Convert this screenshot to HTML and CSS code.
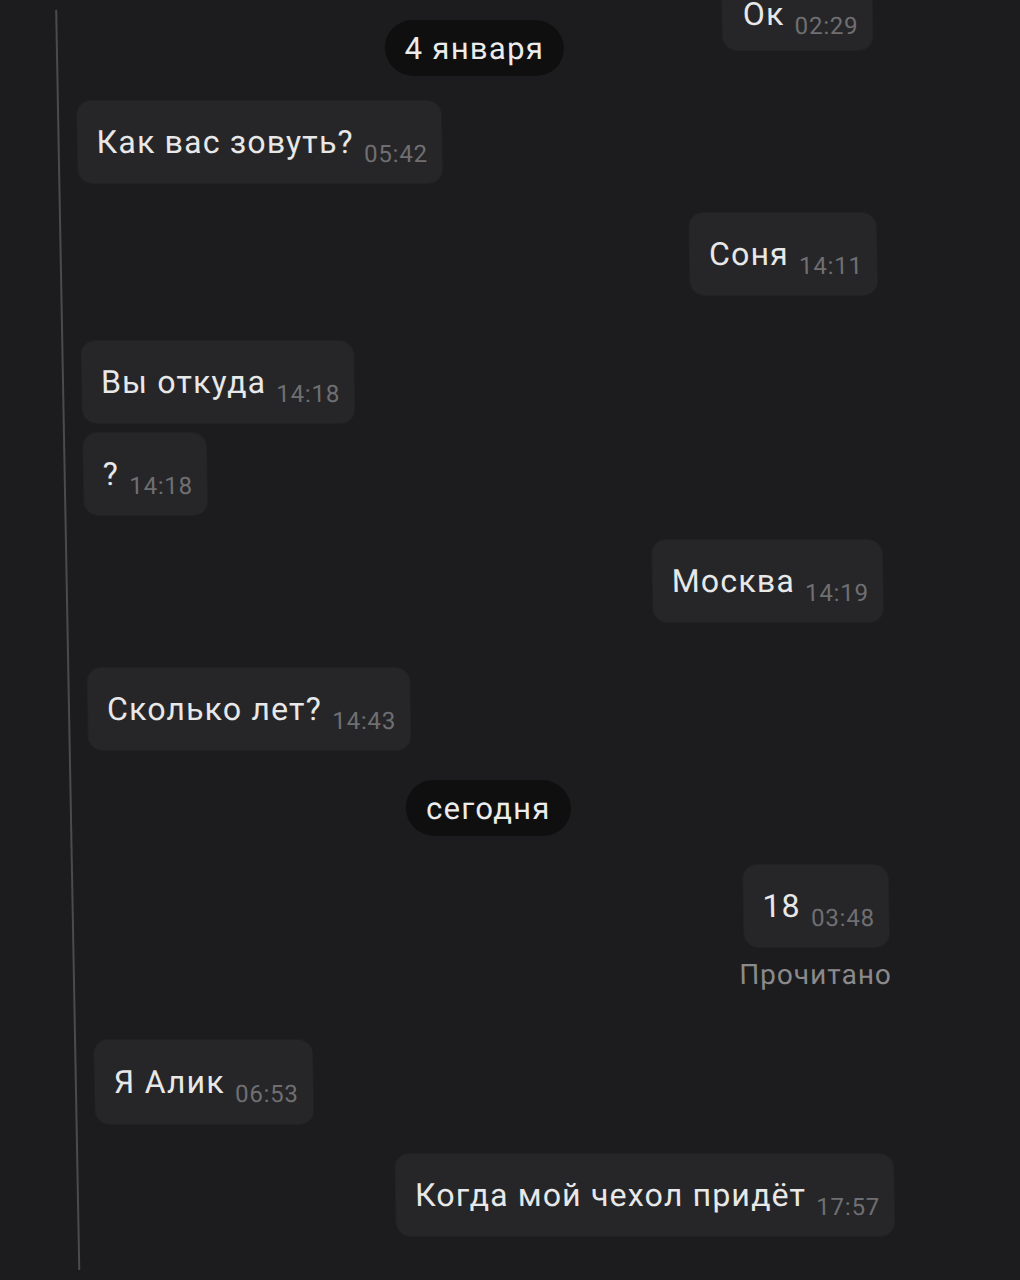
FILE: index.html
```html
<!DOCTYPE html>
<html lang="ru">
<head>
<meta charset="utf-8">
<title>Чат</title>
<link rel="stylesheet" href="styles.css">
</head>
<body>
<div class="screen">
  <div class="chat">
    <div class="msg out first"><span class="text">Ок</span><span class="time">02:29</span></div>
    <div class="date overlap">4 января</div>
    <div class="msg in gap-a"><span class="text">Как вас зовуть?</span><span class="time">05:42</span></div>
    <div class="msg out gap-b"><span class="text">Соня</span><span class="time">14:11</span></div>
    <div class="msg in gap-l"><span class="text">Вы откуда</span><span class="time">14:18</span></div>
    <div class="msg in gap-xs"><span class="text">?</span><span class="time">14:18</span></div>
    <div class="msg out gap-a"><span class="text">Москва</span><span class="time">14:19</span></div>
    <div class="msg in gap-l"><span class="text">Сколько лет?</span><span class="time">14:43</span></div>
    <div class="date gap-b">сегодня</div>
    <div class="msg out gap-c"><span class="text">18</span><span class="time">03:48</span></div>
    <div class="read">Прочитано</div>
    <div class="msg in gap-read tall"><span class="text">Я Алик</span><span class="time">06:53</span></div>
    <div class="msg out gap-b"><span class="text">Когда мой чехол придёт</span><span class="time">17:57</span></div>
  </div>
</div>
</body>
</html>
```
FILE: styles.css
```css
html, body {
  margin: 0;
  padding: 0;
  background: #1c1c1e;
  height: 1280px;
  overflow: hidden;
}

body {
  font-family: Roboto, "Noto Sans", sans-serif;
  color: #e6e6e6;
}

.screen {
  padding-top: 10px;
  transform: skewX(1.05deg);
  transform-origin: 0 0;
}

.chat {
  margin-left: 55px;
  width: 797px;
  height: 1260px;
  border-left: 2px solid #4b4b4d;
  padding-left: 18px;
  display: flex;
  flex-direction: column;
}

.msg {
  display: flex;
  align-items: center;
  gap: 10px;
  height: 82px;
  box-sizing: border-box;
  padding: 0 14px 0 19px;
  background: #262628;
  border-radius: 14px;
  box-shadow: 0 0 0 1px rgba(255, 255, 255, 0.025);
}

.msg.in { align-self: flex-start; }
.msg.out { align-self: flex-end; }
.msg.tall { height: 84px; }

.text {
  font-size: 32px;
  letter-spacing: 1.2px;
  line-height: 1;
  color: #e8e8e8;
  white-space: nowrap;
}

.time {
  font-size: 24px;
  letter-spacing: 0.8px;
  line-height: 1;
  color: #6f6f72;
  margin-top: 24px;
  white-space: nowrap;
}

.first {
  margin-top: -28px;
  height: 68px;
  padding-left: 21px;
  padding-bottom: 4px;
}

.date {
  align-self: center;
  height: 56px;
  box-sizing: border-box;
  padding: 0 20px;
  display: flex;
  align-items: center;
  background: #0f0f10;
  border-radius: 28px;
  font-size: 31px;
  letter-spacing: 1.3px;
  color: #ececec;
}

.overlap { margin-top: -30px; }

.gap-xs { margin-top: 10px; }
.gap-a { margin-top: 25px; }
.gap-b { margin-top: 30px; }
.gap-c { margin-top: 29px; }
.gap-l { margin-top: 46px; }
.gap-read { margin-top: 49px; }

.read {
  align-self: flex-end;
  margin-top: 12px;
  margin-right: -2px;
  font-size: 28px;
  letter-spacing: 1px;
  line-height: 32px;
  color: #8a8a8c;
}
```
